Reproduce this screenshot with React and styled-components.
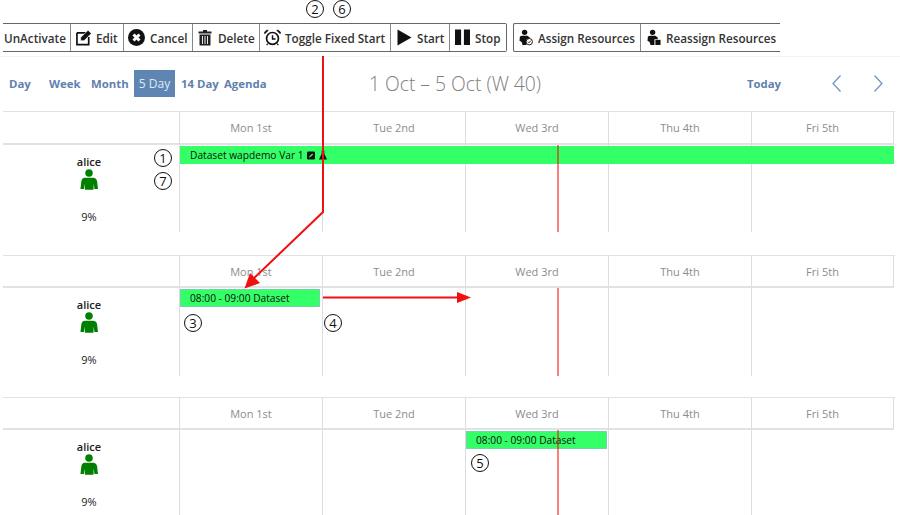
import React from 'react';
import styled, { createGlobalStyle } from 'styled-components';

const GlobalStyle = createGlobalStyle`
	html, body {
		margin: 0;
		padding: 0;
		background: #fff;
		overflow: hidden;
		font-family: 'Open Sans', 'Noto Sans', sans-serif;
	}
`;

const Page = styled.div`
	position: relative;
	width: 900px;
	height: 515px;
	overflow: hidden;
	background: #fff;
`;

// Toolbar
const Toolbar = styled.div`
	display: flex;
	padding: 23px 0 0 3px;
	height: 29px;
	box-sizing: content-box;
`;

const ButtonGroup = styled.div`
	display: flex;
	height: 29px;
	box-sizing: border-box;
	border-top: 1px solid #666;
	border-bottom: 1px solid #666;
	border-right: ${({ $open }) => ($open ? 'none' : '1px solid #666')};
	border-left: ${({ $bordered }) => ($bordered ? '1px solid #666' : 'none')};
	border-radius: ${({ $bordered, $open }) =>
		$bordered ? '2px 0 0 2px' : $open ? '0' : '0 2px 2px 0'};
	margin-left: ${({ $bordered }) => ($bordered ? '6px' : '0')};
`;

const ToolButton = styled.div`
	display: flex;
	flex: none;
	align-items: center;
	width: ${({ $w }) => $w}px;
	box-sizing: border-box;
	padding-left: ${({ $pad }) => $pad}px;
	gap: ${({ $gap }) => $gap || 4}px;
	border-right: ${({ $last }) => ($last ? 'none' : '1px solid #888')};
	font-size: 11.7px;
	font-weight: 600;
	color: #333;
	white-space: nowrap;
`;

const Rule = styled.div`
	height: 1px;
	margin-top: 4px;
	background: #eef5fa;
`;

// Date navigation
const NavBar = styled.div`
	display: flex;
	align-items: center;
	height: 54px;
	padding-left: 9px;
`;

const ViewLink = styled.div`
	flex: none;
	width: ${({ $w }) => $w}px;
	height: 27px;
	margin-top: -1px;
	display: flex;
	align-items: center;
	justify-content: ${({ $active }) => ($active ? 'center' : 'flex-start')};
	font-size: ${({ $active }) => ($active ? '12px' : '11.4px')};
	font-weight: ${({ $active }) => ($active ? 400 : 700)};
	color: ${({ $active }) => ($active ? '#dfe8f2' : '#5f81ad')};
	background: ${({ $active }) => ($active ? '#5f86b3' : 'transparent')};
	white-space: nowrap;
`;

const RangeTitle = styled.div`
	flex: none;
	width: 172px;
	margin: -1px 206px 0 95px;
	font-size: 19.3px;
	font-weight: 300;
	color: #808080;
	white-space: nowrap;
`;

const TodayLink = styled.div`
	flex: none;
	width: 85px;
	margin-top: -1px;
	font-size: 11.3px;
	font-weight: 700;
	color: #5f81ad;
`;

const Chevron = styled.svg`
	flex: none;
	width: 9px;
	height: 17px;
	margin: -1px 33px 0 0;
	fill: none;
	stroke: #6c90bc;
	stroke-width: 1.2;
`;

// Schedule
const Schedule = styled.div`
	position: relative;
	margin: 0 0 ${({ $gap }) => $gap}px 3px;
	width: 892px;
	height: ${({ $h }) => $h}px;
	display: grid;
	grid-template-columns: 176px repeat(5, 143px);
	grid-template-rows: ${({ $head }) => $head}px 1fr;
	border-top: 1px solid #e2e2e2;
	box-sizing: border-box;
`;

const Corner = styled.div`
	border-bottom: 2px solid #e2e2e2;
`;

const DayHead = styled.div`
	display: flex;
	align-items: center;
	justify-content: center;
	font-size: 11px;
	color: #8c8c8c;
	border-left: 1px solid #ddd;
	border-bottom: 2px solid #e2e2e2;
	border-right: ${({ $last }) => ($last ? '1px solid #ddd' : 'none')};
`;

const Resource = styled.div`
	display: flex;
	flex-direction: column;
	align-items: center;
	padding: 9px 4px 0 0;
	font-size: 11px;
	color: #222;
`;

const ResourceName = styled.div`
	font-weight: 600;
	line-height: 15px;
`;

const ResourceLoad = styled.div`
	margin-top: 19px;
	line-height: 15px;
`;

const DayCell = styled.div`
	border-left: 1px solid #ddd;
`;

const Timeline = styled.div`
	grid-column: 2 / 7;
	display: grid;
	grid-template-columns: repeat(5, 143px);
	position: relative;
`;

const EventBar = styled.div`
	position: absolute;
	top: 1px;
	left: ${({ $left }) => $left}px;
	width: ${({ $w }) => $w}px;
	height: 18px;
	box-sizing: border-box;
	padding-left: ${({ $dashed }) => ($dashed ? '9px' : '10px')};
	display: flex;
	align-items: center;
	gap: 3px;
	background: #33ff66;
	font-size: 10.2px;
	color: #111;
	white-space: nowrap;
	border: ${({ $dashed }) => ($dashed ? '1px dashed #9db8d4' : 'none')};
`;

const NowLine = styled.div`
	position: absolute;
	top: 0;
	bottom: 0;
	left: 378px;
	width: 2px;
	background: rgba(255, 0, 0, 0.5);
`;

const Callout = styled.div`
	position: absolute;
	left: ${({ $x }) => $x - 9}px;
	top: ${({ $y }) => $y - 9}px;
	width: 18px;
	height: 18px;
	box-sizing: border-box;
	border: 1px solid #111;
	border-radius: 50%;
	background: #fff;
	display: flex;
	align-items: center;
	justify-content: center;
	font-family: 'Open Sans', 'Noto Sans', sans-serif;
	font-size: 13px;
	font-weight: 500;
	color: #111;
`;

const ArrowLayer = styled.svg`
	position: absolute;
	left: 0;
	top: 0;
	width: 900px;
	height: 515px;
	pointer-events: none;
`;

const EditIcon = () => (
	<svg width="16" height="17" viewBox="0 0 17 17">
		<path d="M1 3.500h10M1 3.500V16H13.500V8" fill="none" stroke="#111" strokeWidth="1.800" />
		<path d="M5 8.500 12.800 0.700 16.300 4.200 8.500 12H5z" fill="#111" stroke="#fff" strokeWidth="0.700" />
	</svg>
);

const CancelIcon = () => (
	<svg width="17" height="17" viewBox="0 0 17 17">
		<circle cx="8.500" cy="8.500" r="8.500" fill="#111" />
		<path d="M5.500 5.500l6 6M11.500 5.500l-6 6" stroke="#fff" strokeWidth="3" />
	</svg>
);

const TrashIcon = () => (
	<svg width="14" height="17" viewBox="0 0 14 17">
		<path d="M0.500 2.500h4.500V1h4v1.500h4.500V4.500H0.500z" fill="#222" />
		<path d="M1.500 5.500h11V16.500h-11z" fill="#222" />
		<path d="M4.500 7v8M7 7v8M9.500 7v8" stroke="#fff" strokeWidth="0.900" />
	</svg>
);

const ClockIcon = () => (
	<svg width="17" height="17" viewBox="0 0 18 17">
		<circle cx="9" cy="9.500" r="6.300" fill="none" stroke="#111" strokeWidth="1.800" />
		<path d="M9 6v4h3.200" fill="none" stroke="#111" strokeWidth="1.500" />
		<path d="M0.800 4.500 4.500 1 2.800 0.800 0.600 2.800zM17.200 4.500 13.500 1l1.700-.2 2.200 2z" fill="#111" stroke="#111" strokeWidth="0.800" />
		<path d="M4 15l-1.200 1.600M14 15l1.200 1.600" stroke="#111" strokeWidth="1.200" />
	</svg>
);

const PlayIcon = () => (
	<svg width="15" height="17" viewBox="0 0 15 17">
		<path d="M0.500 0.500 14.500 8.500 0.500 16.500z" fill="#111" />
	</svg>
);

const PauseIcon = () => (
	<svg width="15" height="17" viewBox="0 0 16 17">
		<path d="M0 0h6.500v16.500H0zM9.500 0H16v16.500H9.500z" fill="#111" />
	</svg>
);

const AssignIcon = ({ box }) => (
	<svg width="14" height="17" viewBox="0 0 15 17">
		<circle cx="6" cy="3" r="2.900" fill="#111" />
		<path d="M1 7.500 3 6.500h6l2.500 2v2H8v6H3.500v-1.500L2.500 13 0.500 12z" fill="#111" />
		{box ? (
			<path d="M9 11h5.500v5.500H9z" fill="#111" />
		) : (
			<>
				<circle cx="11" cy="13" r="3.400" fill="#fff" stroke="#111" strokeWidth="1" />
				<path d="M9.500 13l1.200 1.200 1.800-2.200" fill="none" stroke="#111" strokeWidth="0.900" />
			</>
		)}
	</svg>
);

const PersonIcon = () => (
	<svg width="18" height="21" viewBox="0 0 20 23">
		<circle cx="10" cy="4.300" r="4.200" fill="#008000" />
		<path d="M5.500 9.500h9c2.500 0 4 1.500 4.500 4l1 8.500h-4l-.8-6-.2 7H5.500l-.2-7-.8 6H0.500l1-8.500c.5-2.500 1.500-4 4-4z" fill="#008000" />
	</svg>
);

const BadgeIcons = () => (
	<>
		<svg width="8" height="9" viewBox="0 0 10 10">
			<path d="M0 1.500Q0 0 1.500 0h7Q10 0 10 1.500v7Q10 10 8.500 10h-7Q0 10 0 8.500z" fill="#111" />
			<path d="M2.500 7.500 3 5.800 6.500 2.500 7.800 3.800 4.300 7z" fill="#33ff66" />
		</svg>
		<svg width="8" height="10" viewBox="0 0 9 10" style={{ marginLeft: 1 }}>
			<path d="M3 0h3v3.500L9 10H0l3-6.500z" fill="#111" />
		</svg>
	</>
);

const days = ['Mon 1st', 'Tue 2nd', 'Wed 3rd', 'Thu 4th', 'Fri 5th'];

const ScheduleBlock = ({ h, gap, head, event }) => (
	<Schedule $h={h} $gap={gap} $head={head}>
		<Corner />
		{days.map((d, i) => (
			<DayHead key={d} $last={i === 4}>{d}</DayHead>
		))}
		<Resource>
			<ResourceName>alice</ResourceName>
			<PersonIcon />
			<ResourceLoad>9%</ResourceLoad>
		</Resource>
		<Timeline>
			{days.map(d => (
				<DayCell key={d} />
			))}
			{event}
			<NowLine />
		</Timeline>
	</Schedule>
);

const App = () => (
	<Page>
		<GlobalStyle />
		<Toolbar>
			<ButtonGroup>
				<ToolButton $w={68} $pad={1}>UnActivate</ToolButton>
				<ToolButton $w={53} $pad={5}><EditIcon />Edit</ToolButton>
				<ToolButton $w={69} $pad={4} $gap={5}><CancelIcon />Cancel</ToolButton>
				<ToolButton $w={67} $pad={5} $gap={6}><TrashIcon />Delete</ToolButton>
				<ToolButton $w={131} $pad={4}><ClockIcon />Toggle Fixed Start</ToolButton>
				<ToolButton $w={59} $pad={6} $gap={5}><PlayIcon />Start</ToolButton>
				<ToolButton $w={56} $pad={5} $gap={5} $last><PauseIcon />Stop</ToolButton>
			</ButtonGroup>
			<ButtonGroup $bordered $open>
				<ToolButton $w={127} $pad={5} $gap={5}><AssignIcon />Assign Resources</ToolButton>
				<ToolButton $w={139} $pad={6} $gap={5} $last><AssignIcon box />Reassign Resources</ToolButton>
			</ButtonGroup>
		</Toolbar>
		<Rule />
		<NavBar>
			<ViewLink $w={40}>Day</ViewLink>
			<ViewLink $w={42}>Week</ViewLink>
			<ViewLink $w={43}>Month</ViewLink>
			<ViewLink $w={41} $active>5 Day</ViewLink>
			<ViewLink $w={6} />
			<ViewLink $w={43}>14 Day</ViewLink>
			<ViewLink $w={50}>Agenda</ViewLink>
			<RangeTitle>1 Oct – 5 Oct (W 40)</RangeTitle>
			<TodayLink>Today</TodayLink>
			<Chevron viewBox="0 0 9 17"><path d="M8.500 0.500 1 8.500 8.500 16.500" /></Chevron>
			<Chevron viewBox="0 0 9 17"><path d="M0.500 0.500 8 8.500 0.500 16.500" /></Chevron>
		</NavBar>
		<ScheduleBlock
			h={121}
			gap={23}
			head={33}
			event={<EventBar $left={1} $w={714}>Dataset wapdemo Var 1<BadgeIcons /></EventBar>}
		/>
		<ScheduleBlock
			h={121}
			gap={21}
			head={32}
			event={<EventBar $left={1} $w={140} $dashed>08:00 - 09:00 Dataset</EventBar>}
		/>
		<ScheduleBlock
			h={118}
			gap={0}
			head={32}
			event={<EventBar $left={287} $w={141} $dashed>08:00 - 09:00 Dataset</EventBar>}
		/>
		<ArrowLayer viewBox="0 0 900 515">
			<path d="M323 56V212L250 282" fill="none" stroke="#f01010" strokeWidth="2" />
			<path d="M244.500 288.500 250 273 260 283z" fill="#f01010" />
			<path d="M323 297.500H458" fill="none" stroke="#f01010" strokeWidth="2" />
			<path d="M471 297.500 457 292V303z" fill="#f01010" />
		</ArrowLayer>
		<Callout $x={315} $y={9}>2</Callout>
		<Callout $x={342} $y={9}>6</Callout>
		<Callout $x={163} $y={158}>1</Callout>
		<Callout $x={163} $y={181}>7</Callout>
		<Callout $x={193} $y={323}>3</Callout>
		<Callout $x={333} $y={323}>4</Callout>
		<Callout $x={480} $y={463}>5</Callout>
	</Page>
);

export default App;
